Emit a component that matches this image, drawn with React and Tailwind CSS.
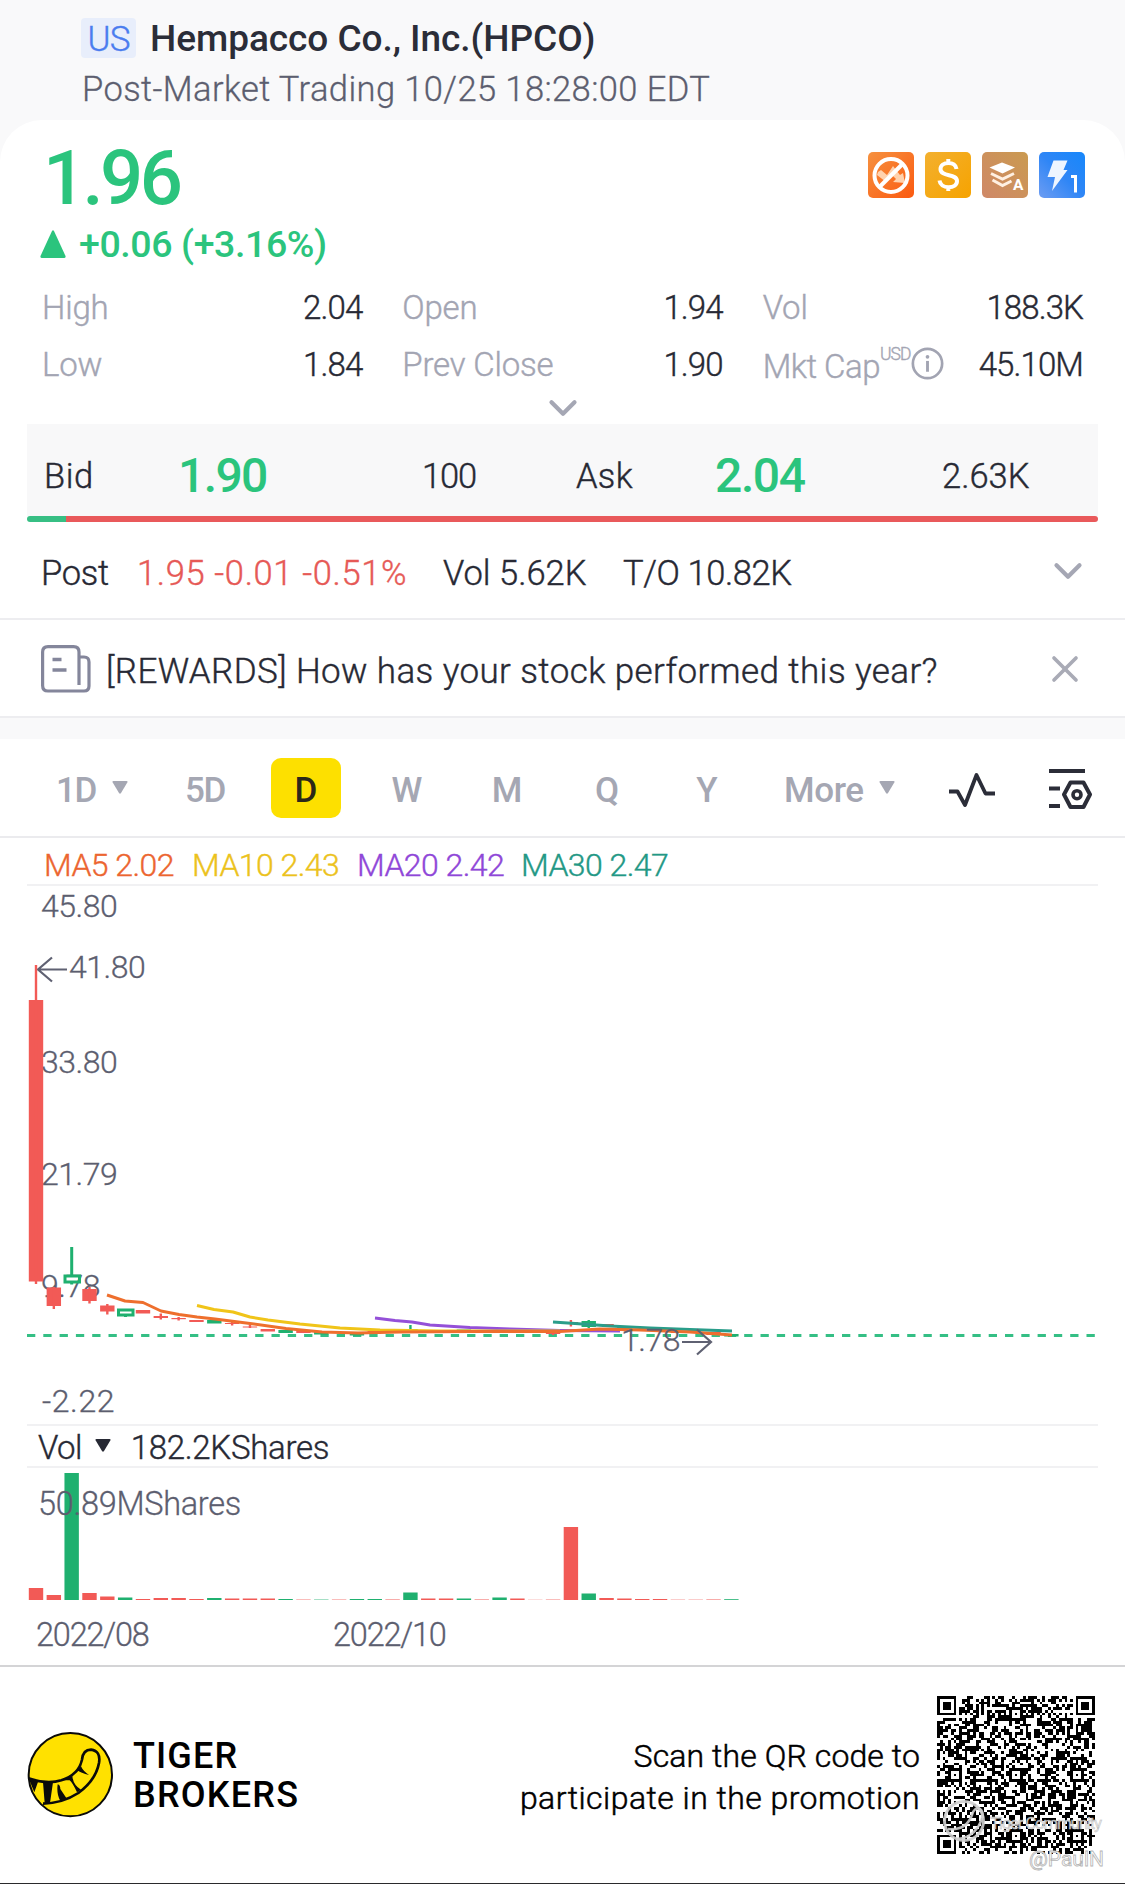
import { ChevronDown, X } from "lucide-react";

const GREEN = "#1fb06f";
const RED = "#f25a56";

const stats = [
  { label: "High", value: "2.04" },
  { label: "Open", value: "1.94" },
  { label: "Vol", value: "188.3K" },
  { label: "Low", value: "1.84" },
  { label: "Prev Close", value: "1.90" },
  { label: "Mkt Cap", value: "45.10M", unit: "USD" },
];

const SLOT = 17.83;
const slotX = (i) => 36 + i * SLOT;

// [index, color, top, bottom, wickTop, wickBottom]
const candles = [
  [0, RED, 1000, 1281.5, 965, 1284],
  [1, RED, 1287.5, 1306, 1287, 1309],
  [3, RED, 1289, 1301, 1287, 1303.5],
  [4, RED, 1305.5, 1311.5, 1304, 1314.5],
  [6, RED, 1310, 1313.5],
  [7, RED, 1316, 1318, 1313.5, 1319.5],
  [8, RED, 1318, 1319.2, 1317, 1320.5],
  [9, RED, 1320, 1322],
  [10, GREEN, 1320, 1323.5],
  [11, RED, 1323, 1324, 1321.5, 1325.5],
  [12, RED, 1326.5, 1327.5, 1325, 1328],
  [13, RED, 1329, 1331.5],
  [14, GREEN, 1330, 1333],
  [15, RED, 1331, 1333],
  [16, GREEN, 1332, 1334.5],
  [18, GREEN, 1333, 1335.5],
  [19, RED, 1331, 1333],
  [21, GREEN, 1329, 1331.5, 1325, 1333],
  [24, GREEN, 1329.5, 1331],
  [29, RED, 1331, 1334, 1331, 1335],
  [30, RED, 1322, 1324, 1320, 1326.5],
  [31, GREEN, 1321, 1327, 1320, 1328],
  [32, RED, 1324, 1326],
  [33, GREEN, 1327, 1329],
  [35, RED, 1330, 1332],
  [36, RED, 1331, 1333],
  [38, RED, 1332, 1335],
  [39, GREEN, 1334, 1336.5],
];

const averages = [
  {
    color: "#2a9d8a",
    points: "553,1322 575,1323.5 610,1326 650,1328 690,1329.5 732,1331",
  },
  {
    color: "#9450d8",
    points:
      "375,1318 395,1320.5 412,1322 430,1325 470,1327.5 510,1329 560,1330.5 620,1331",
  },
  {
    color: "#f0c419",
    points:
      "197,1305.5 214,1309.5 233,1312 250,1317 268,1320 300,1324 340,1328 380,1330 440,1331 560,1331",
  },
  {
    color: "#ee6f2d",
    points:
      "107,1295 125,1301 143,1302.5 161,1311 179,1314.5 197,1317 215,1319 250,1323.5 286,1328.5 322,1332 358,1333 400,1332 470,1331.5 560,1331.5 600,1329 640,1330 690,1332 732,1335",
  },
];

// [color, height, opacity]
const volumes = [
  [RED, 12], [RED, 5], [GREEN, 127], [RED, 7], [RED, 3.5], [GREEN, 2.5],
  [RED, 1], [RED, 2], [RED, 2], [RED, 1], [GREEN, 2], [RED, 1.5],
  [RED, 1.5], [RED, 1.5], [GREEN, 1], [RED, 1, 0.4], [GREEN, 1, 0.4], [RED, 1, 0.4],
  [GREEN, 1], [GREEN, 1], [RED, 1, 0.5], [GREEN, 7.5], [RED, 1.5], [RED, 1.5],
  [GREEN, 1.5], [RED, 1, 0.5], [GREEN, 2.5], [RED, 1.5], [RED, 1, 0.2], [RED, 1, 0.4],
  [RED, 73], [GREEN, 6.5], [RED, 2], [RED, 1.5], [RED, 1], [RED, 1],
  [RED, 1, 0.3], [RED, 1, 0.3], [RED, 1, 0.5], [GREEN, 1, 0.8],
];

const priceLabels = [
  ["45.80", 41, 917],
  ["33.80", 41, 1072.5],
  ["21.79", 41, 1185],
  ["9.78", 41, 1296.5],
  ["-2.22", 42, 1411.5],
];

const QR_SIZE = 57;

// finder and alignment patterns first, everything else is noise
const qrModule = (x, y) => {
  const last = QR_SIZE - 7;
  const corners = [[0, 0], [last, 0], [0, last]];
  for (const [cx, cy] of corners) {
    const dx = x - cx;
    const dy = y - cy;
    if (dx >= -1 && dx <= 7 && dy >= -1 && dy <= 7) {
      const ring = Math.max(Math.abs(dx - 3), Math.abs(dy - 3));
      return ring === 3 || ring <= 1;
    }
  }
  for (const cx of [6, 28, 50]) {
    for (const cy of [6, 28, 50]) {
      const ring = Math.max(Math.abs(x - cx), Math.abs(y - cy));
      const onCorner = (cx === 6 && cy !== 28) || (cx === 50 && cy === 6);
      if (!onCorner && ring <= 2) return ring !== 1;
    }
  }
  if (x === 6 || y === 6) return (x + y) % 2 === 0;
  let h = (x * 374761393 + y * 668265263) | 0;
  h = Math.imul(h ^ (h >>> 13), 1274126177);
  h = Math.imul(h ^ (h >>> 15), 2246822519);
  return ((h ^ (h >>> 16)) & 15) < 8;
};

const qrPath = () => {
  let d = "";
  for (let y = 0; y < QR_SIZE; y++) {
    for (let x = 0; x < QR_SIZE; x++) {
      if (qrModule(x, y)) d += `M${x} ${y}h1v1h-1z`;
    }
  }
  return d;
};

const Triangle = ({ className }) => (
  <svg viewBox="0 0 16 13" className={className} fill="currentColor">
    <path d="M1.5 0h13q1.6 0 .8 1.4L9 12q-1 1.500-2 0L.7 1.400Q-.1 0 1.500 0z" />
  </svg>
);

const Badges = () => (
  <div className="flex gap-[11px] -mt-1.5">
    <svg viewBox="0 0 46 46" className="size-[46px]">
      <defs>
        <linearGradient id="b1" x1="0" y1="0" x2="1" y2="1">
          <stop offset="0" stopColor="#f6913f" />
          <stop offset="1" stopColor="#fb5a10" />
        </linearGradient>
      </defs>
      <rect width="46" height="46" rx="5" fill="url(#b1)" />
      <path
        d="M10 20l3-2 6 5 6-9 7 9 3-2 2 10-12-1 3-3-4-4-6 7-9-7z"
        fill="#ffd2ae"
      />
      <circle cx="23" cy="23.500" r="16.500" fill="none" stroke="#fff" strokeWidth="4" />
      <path d="M11.500 35L34.500 12" stroke="#fff" strokeWidth="4" />
    </svg>
    <svg viewBox="0 0 46 46" className="size-[46px]">
      <defs>
        <linearGradient id="b2" x1="0" y1="0" x2="1" y2="1">
          <stop offset="0" stopColor="#f3b02f" />
          <stop offset="1" stopColor="#f6a300" />
        </linearGradient>
      </defs>
      <rect width="46" height="46" rx="5" fill="url(#b2)" />
      <path
        d="M31.500 17c-.5-4-4-6-8-6-4.500 0-8 2.200-8 6 0 8.500 16.500 4 16.500 12 0 4-3.500 6.200-8.500 6.200-4.800 0-8.500-2.500-9-6.700M23.300 7v4M23.300 35v4"
        fill="none"
        stroke="#fff"
        strokeWidth="4"
      />
    </svg>
    <svg viewBox="0 0 46 46" className="size-[46px]">
      <defs>
        <linearGradient id="b3" x1="1" y1="0" x2="0" y2="1">
          <stop offset="0" stopColor="#ca9a50" />
          <stop offset="1" stopColor="#cf8868" />
        </linearGradient>
      </defs>
      <rect width="46" height="46" rx="5" fill="url(#b3)" />
      <path d="M7.500 15.500L20 10.500l13 5-12.500 6z" fill="#fff" />
      <path
        d="M9 21.500l11.500 5.500L32 21.500M10.500 28l10 5.500L29.500 29"
        fill="none"
        stroke="#fff0e2"
        strokeWidth="3"
      />
      <text x="31" y="38" fontSize="15.500" fontWeight="700" fill="#fff">
        A
      </text>
    </svg>
    <svg viewBox="0 0 46 46" className="size-[46px]">
      <defs>
        <linearGradient id="b4" x1="0" y1="1" x2="1" y2="0">
          <stop offset="0" stopColor="#6d9df2" />
          <stop offset="0.5" stopColor="#2f86f6" />
          <stop offset="1" stopColor="#1687fb" />
        </linearGradient>
      </defs>
      <rect width="46" height="46" rx="5" fill="url(#b4)" />
      <path d="M14.500 8.500h14l-4 9.500h4L13 39l3-14H8.500z" fill="#eef5ff" />
      <path d="M32 24.500h4.500V40.500" fill="none" stroke="#fff" strokeWidth="3" />
    </svg>
  </div>
);

const Quote = () => (
  <section className="bg-white rounded-t-[42px]">
    <div className="flex items-center justify-between h-[101px] pt-[14px] pl-[43px] pr-10">
      <span className="text-[76px] leading-none font-medium tracking-[-3.6px] text-[#2bc47d]">
        1.96
      </span>
      <Badges />
    </div>
    <div className="flex items-center h-[45px] pl-[40px] text-[#2bc47d]">
      <svg viewBox="0 0 26 28" className="w-[26px] h-[28px]" fill="currentColor">
        <path d="M12 1q1-1.500 2 0l11.500 25q.5 2-1.500 2H2q-2 0-1.500-2z" />
      </svg>
      <span className="ml-[13px] pt-0.5 text-[37.500px] font-medium tracking-[-0.4px]">
        +0.06 (+3.16%)
      </span>
    </div>

    <div className="grid grid-cols-3 gap-x-10 px-[42px] pt-3">
      {stats.map((item) => (
        <div
          key={item.label}
          className="flex items-center justify-between h-[57px] pt-0.5 text-[33px] font-light [-webkit-text-stroke-width:0.4px]"
        >
          <span className="flex items-center text-[#a3a5b3] tracking-[-0.2px]">
            <span className={item.unit ? "pt-1 tracking-[-0.5px]" : ""}>
              {item.label}
            </span>
            {item.unit && (
              <>
                <sup className="text-[17.500px] leading-none top-[-10px] tracking-[-0.9px]">
                  {item.unit}
                </sup>
                <svg viewBox="0 0 32 32" className="size-[33px] -mt-0.5" fill="none">
                  <circle cx="16" cy="16" r="14.200" stroke="#a2a4b2" strokeWidth="2.600" />
                  <path d="M16 13.500V24" stroke="#a2a4b2" strokeWidth="2.800" />
                  <circle cx="16" cy="9.500" r="1.800" fill="#a2a4b2" />
                </svg>
              </>
            )}
          </span>
          <span className="text-[#272934] tracking-[-0.9px]">{item.value}</span>
        </div>
      ))}
    </div>
    <div className="flex items-center justify-center h-8">
      <ChevronDown className="size-[46px] text-[#a5a7b4]" strokeWidth={2.2} />
    </div>

    <div className="mx-[27px]">
      <div className="grid grid-cols-[134px_244px_154px_139px_227px_1fr] items-center h-[92px] pt-3 pl-[17px] bg-[#f8f8f9] text-[34.500px] font-light text-[#272934]">
        <span className="tracking-[0.5px] [-webkit-text-stroke-width:0.4px]">Bid</span>
        <span className="text-[48px] leading-none font-medium tracking-[-1.6px] text-[#2bc47d]">
          1.90
        </span>
        <span className="tracking-[-1.100px] [-webkit-text-stroke-width:0.4px]">100</span>
        <span className="tracking-[0.3px] [-webkit-text-stroke-width:0.4px]">Ask</span>
        <span className="text-[48px] leading-none font-medium tracking-[-1.400px] text-[#2bc47d]">
          2.04
        </span>
        <span className="[-webkit-text-stroke-width:0.4px]">2.63K</span>
      </div>
      <div className="flex h-1.5 rounded-full overflow-hidden">
        <div className="w-[39px] bg-[#37bf84]" />
        <div className="flex-1 bg-[#e9595b]" />
      </div>
    </div>

    <div className="flex items-center h-[98px] pt-1.5 pl-[41px] pr-[34px] border-b-2 border-[#ededf0] text-[34.500px] font-light text-[#272934] [-webkit-text-stroke-width:0.4px]">
      <span className="w-[96px] tracking-[-0.3px]">Post</span>
      <span className="w-[306px] tracking-[0.65px] text-[#e65956]">1.95 -0.01 -0.51%</span>
      <span className="w-[180px]">Vol 5.62K</span>
      <span className="tracking-[-0.4px]">T/O 10.82K</span>
      <ChevronDown className="ml-auto size-[46px] -mt-1 text-[#a5a7b4]" strokeWidth={2.2} />
    </div>

    <div className="flex items-center h-[98px] pl-[41px] pr-[38px] border-b-2 border-[#ededf0]">
      <svg viewBox="0 0 50 48" className="w-[50px] h-[48px] mt-0.5" fill="none" stroke="#84869b" strokeWidth="3.200">
        <path d="M38 40V7q0-5.400-5.400-5.400H7Q1.600 1.600 1.600 7v33.500q0 5.500 5.400 5.500h36q5 0 5-5V17q0-5-5-5h-5M38 28v12" />
        <path d="M11.500 14.500h9M11.500 25h14" strokeWidth="3.600" />
      </svg>
      <span className="ml-[15px] pt-1.5 text-[35px] font-light tracking-[0.4px] text-[#272934] [-webkit-text-stroke-width:0.4px]">
        [REWARDS] How has your stock performed this year?
      </span>
      <X className="ml-auto size-[44px] mt-0.5 text-[#a9abb6]" strokeWidth={2} />
    </div>
  </section>
);

const Tabs = () => (
  <nav className="flex items-center h-[99px] pl-[56px] border-b-2 border-[#ebebee] text-[35px] font-medium text-[#a5a7b3]">
    <div className="flex items-center w-[129px] pt-1.5">
      <span className="tracking-[-1.500px]">1D</span>
      <Triangle className="w-4 h-[13px] ml-[16px] -mt-1.5" />
    </div>
    <span className="w-[86px] pt-1.5 tracking-[-1.500px]">5D</span>
    <span className="flex items-center justify-center w-[70px] h-[60px] pt-1.5 mr-[16px] rounded-[10px] bg-[#fde000] text-[#2b2818]">
      D
    </span>
    <span className="w-[100px] pt-1.5 text-center">W</span>
    <span className="w-[100px] pt-1.5 text-center">M</span>
    <span className="w-[100px] pt-1.5 text-center">Q</span>
    <span className="w-[100px] pt-1.5 text-center">Y</span>
    <div className="flex items-center w-[164px] pt-1.5 ml-[27px]">
      <span className="tracking-[-0.4px]">More</span>
      <Triangle className="w-4 h-[13px] ml-[15px] -mt-1.5" />
    </div>
    <svg viewBox="0 0 48 36" className="w-[48px] h-[36px] mt-1" fill="none" stroke="#2b2d38" strokeWidth="3.800" strokeLinejoin="round">
      <path d="M1 19.500h8.500l7.500 13.500L28.500 3l9 18.500H47" />
    </svg>
    <svg viewBox="0 0 44 42" className="w-[44px] h-[42px] mt-0.5 ml-[52px]" fill="none" stroke="#2b2d38" strokeWidth="4">
      <path d="M1 3h36M1 20.500h11M1 38h11" />
      <path d="M22.500 14.500h13l6.500 12-6.500 12.500h-13l-6.500-12.500z" strokeLinejoin="round" />
      <circle cx="29" cy="26.700" r="4" strokeWidth="3.600" />
    </svg>
  </nav>
);

const PriceChart = () => (
  <svg viewBox="0 886 1125 538" className="block w-[1125px] h-[538px]">
    <g
      fontSize="32"
      fontWeight="300"
      fill="#5c5e6f"
      stroke="#5c5e6f"
      strokeWidth="0.300"
      letterSpacing="-0.5"
    >
      {priceLabels.map(([text, x, y]) => (
        <text key={text} x={x} y={y} letterSpacing={text[0] === "-" ? 0.6 : -0.5}>
          {text}
        </text>
      ))}
      <text x="69" y="977.500">41.80</text>
    </g>
    <path
      d="M52 957.500L38 969.500l14 12M38 969.500h29"
      fill="none"
      stroke="#5f6172"
      strokeWidth="2.200"
    />
    <path
      d="M27 1335.500H1098"
      stroke="#35bf85"
      strokeWidth="3"
      strokeDasharray="8.300 8"
    />
    {/* the two early up days are drawn hollow */}
    <g fill="none" stroke={GREEN} strokeWidth="3">
      <path d="M71.700 1247V1275M71.700 1283v1.500" />
      <rect x="65" y="1276" width="14.500" height="6" />
      <rect x="118.500" y="1310" width="14.500" height="5" />
      <path d="M125.500 1315v2" />
    </g>
    {candles.map(([i, color, top, bottom, wickTop, wickBottom]) => (
      <g key={i} fill={color}>
        <rect x={slotX(i) - 7.200} y={top} width="14.400" height={bottom - top} />
        {wickTop && (
          <rect
            x={slotX(i) - 1.200}
            y={wickTop}
            width="2.400"
            height={wickBottom - wickTop}
          />
        )}
      </g>
    ))}
    {averages.map((line) => (
      <polyline
        key={line.color}
        points={line.points}
        fill="none"
        stroke={line.color}
        strokeWidth="3"
        strokeLinejoin="round"
      />
    ))}
    <text
      x="621"
      y="1350.500"
      fontSize="32"
      fontWeight="300"
      fill="#5c5e6f"
      stroke="#5c5e6f"
      strokeWidth="0.300"
      letterSpacing="-0.5"
    >
      1.78
    </text>
    <path
      d="M682 1342h29M697 1329.500l14 12.500-14 12.500"
      fill="none"
      stroke="#5f6172"
      strokeWidth="2.200"
    />
  </svg>
);

const VolumeChart = () => (
  <svg viewBox="0 1468 1125 197" className="block w-[1125px] h-[197px]">
    {volumes.map(([color, height, opacity = 1], i) => (
      <rect
        key={i}
        x={slotX(i) - 7.200}
        y={1600 - height}
        width="14.400"
        height={height}
        fill={color}
        opacity={opacity}
      />
    ))}
    <g fontSize="32.500" fontWeight="300" fill="#5c5e6f" stroke="#5c5e6f" strokeWidth="0.300">
      <text x="38" y="1515" letterSpacing="-0.3">
        50.89MShares
      </text>
      <text x="36" y="1645.500" letterSpacing="-1.200">2022/08</text>
      <text x="333" y="1645.500" letterSpacing="-1.200">2022/10</text>
    </g>
  </svg>
);

const Logo = () => (
  <svg viewBox="82 92 261 261" className="size-[87px]">
    <defs>
      <clipPath id="disc">
        <circle cx="212" cy="223" r="126" />
      </clipPath>
    </defs>
    <circle cx="212" cy="223" r="126" fill="#ffe100" />
    <g clipPath="url(#disc)">
      <path
        d="M80 232Q140 254 185 240Q238 222 247 178Q250 148 274 148Q304 152 298 188Q288 240 236 278Q190 308 130 310"
        fill="none"
        stroke="#0a0a0a"
        strokeWidth="8"
      />
      <path
        d="M86 232l30 10-12 34zM130 246h30l-9 62h-16zM174 252q8 2 8 14l20 30-20 6q-12-20-8-50zM190 240l28-14q2 28 26 42l-12 8q-14-30-22-36zM232 210l12-12q6 14 24 26-24-6-36-14z"
        fill="#0a0a0a"
      />
    </g>
    <circle cx="212" cy="223" r="125" fill="none" stroke="#0a0a0a" strokeWidth="6" />
  </svg>
);

const Footer = () => (
  <footer className="relative flex items-center h-[219px] pl-[27px] pr-[30px] pb-0.5 border-t-2 border-[#d4d4d6] text-black">
    <Logo />
    <div className="ml-[19px] pt-0.5 text-[36px] leading-[39px] font-medium">
      <div className="tracking-[1.100px]">TIGER</div>
      <div className="tracking-[1.200px]">BROKERS</div>
    </div>
    <div className="ml-auto mr-[17px] pt-1 text-right text-[32px] leading-[42px] font-light text-black [-webkit-text-stroke-width:0.5px]">
      <div className="tracking-[0.100px]">Scan the QR code to</div>
      <div className="tracking-[0.450px]">participate in the promotion</div>
    </div>
    <svg viewBox="0 0 57 57" className="size-[158px]" shapeRendering="crispEdges">
      <path d={qrPath()} fill="#000" />
    </svg>

    {/* community watermark over the code */}
    <svg viewBox="940 1790 185 94" className="absolute right-0 bottom-0 w-[185px] h-[94px]">
      <circle cx="964" cy="1821" r="19.500" fill="none" stroke="#cfcfcf" strokeWidth="3" opacity="0.9" />
      <path
        d="M948 1829q18 2 24-14 2-8 8-6 6 4-2 18-8 12-22 12"
        fill="none"
        stroke="#cfcfcf"
        strokeWidth="2.500"
        opacity="0.9"
      />
      <text x="990" y="1829" fontSize="17" fill="#e4e4e4" fillOpacity="0.85" stroke="#b9b9b9" strokeWidth="0.4" textLength="112">
        Tiger Community
      </text>
      <text x="1029" y="1866" fontSize="21" fill="#fff" stroke="#b5b5b5" strokeWidth="0.8" textLength="75">
        @PaulN
      </text>
    </svg>
    <div className="absolute inset-x-0 bottom-0 h-px bg-[#2a2a2c]" />
  </footer>
);

export default function App() {
  return (
    <div className="w-[1125px] h-[1884px] overflow-hidden bg-white font-['Roboto',sans-serif] leading-none">
      <div className="bg-[#f9f9fa]">
        <header className="h-[120px] pt-[13px]">
          <div className="flex items-center h-[50px] pl-[81px]">
            <span className="flex items-center justify-center w-[55px] h-[40px] pt-0.5 rounded bg-[#e8eefb] text-[35px] font-light text-[#4a7cef] tracking-[-1px] [-webkit-text-stroke-width:0.4px]">
              US
            </span>
            <h1 className="ml-[14px] text-[37px] font-medium tracking-[-0.05px] text-[#2b2d38]">
              Hempacco Co., Inc.(HPCO)
            </h1>
          </div>
          <p className="flex items-center h-[50px] pt-0.5 pl-[82px] text-[34.500px] font-light tracking-[0.4px] text-[#5c5e6f] [-webkit-text-stroke-width:0.3px]">
            Post-Market Trading 10/25 18:28:00 EDT
          </p>
        </header>
        <Quote />
        <div className="h-[21px]" />
      </div>
      <Tabs />

      <div className="flex items-center h-[48px] mx-[27px] pt-2 pl-[17px] border-b-2 border-[#f1f1f3] text-[32px] font-light tracking-[-0.55px] [-webkit-text-stroke-width:0.4px]">
        <span className="w-[148px] text-[#ec6530]">MA5 2.02</span>
        <span className="w-[165px] text-[#ecc21c]">MA10 2.43</span>
        <span className="w-[164px] text-[#8f47d8]">MA20 2.42</span>
        <span className="text-[#239885]">MA30 2.47</span>
      </div>
      <PriceChart />
      <div className="flex items-center h-[44px] mx-[27px] pt-0.5 pl-[11px] border-y-2 border-[#f1f1f3] text-[33px] font-light text-[#272934] [-webkit-text-stroke-width:0.4px]">
        <span className="tracking-[-0.6px]">Vol</span>
        <Triangle className="w-4 h-[13px] ml-[13px] -mt-1" />
        <span className="ml-[20px] tracking-[-0.3px]">182.2KShares</span>
      </div>
      <VolumeChart />
      <Footer />
    </div>
  );
}
